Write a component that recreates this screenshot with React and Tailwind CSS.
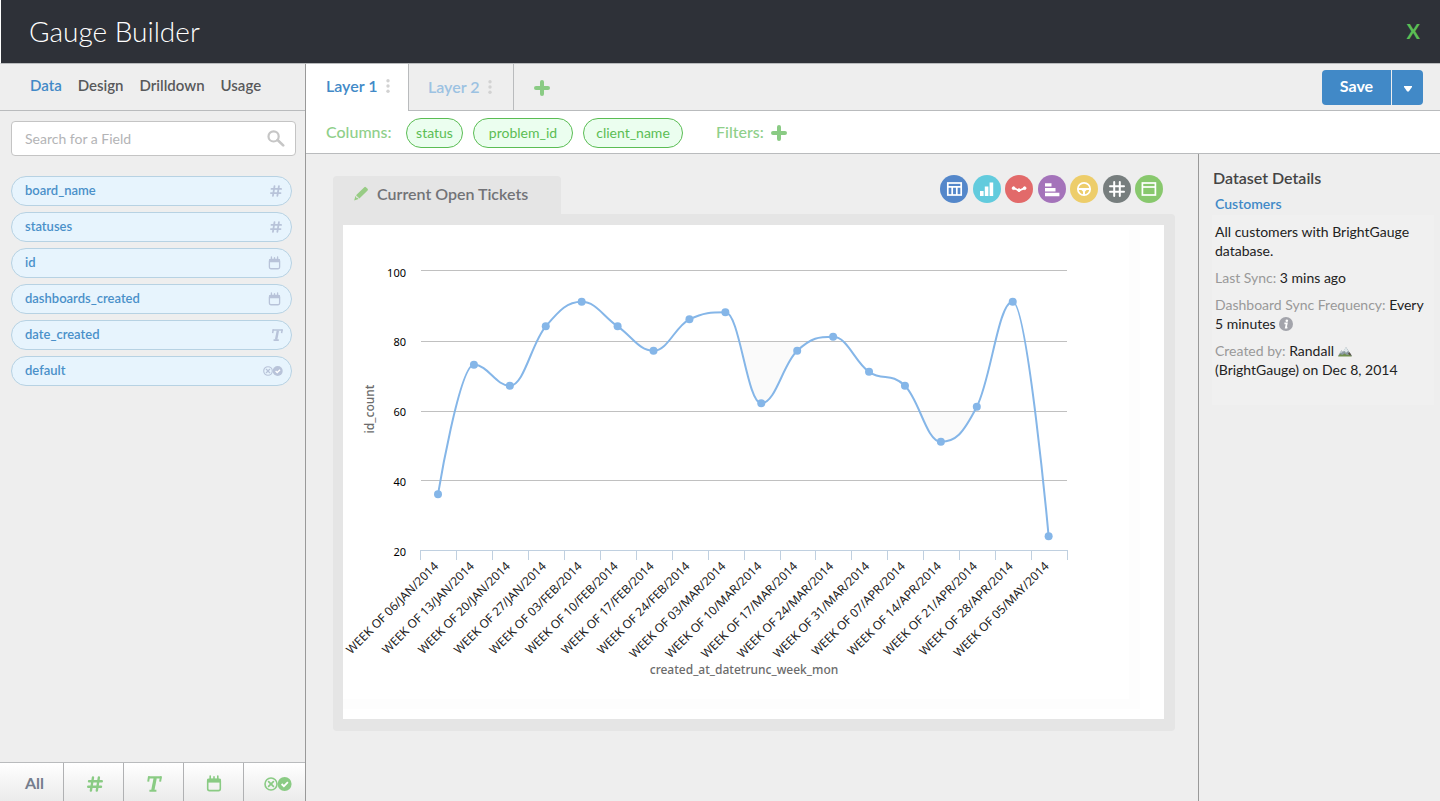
import React from "react";

function HashIcon({ className }) {
  return (
    <svg viewBox="0 0 16 16" className={className} fill="none" stroke="currentColor" strokeWidth="2.4" strokeLinecap="round" aria-hidden="true">
      <path d="M6 1.4 3.9 14.6M11.9 1.4 9.8 14.6M2 5.2h12.8M1.2 10.8H14" />
    </svg>
  );
}

function TextIcon({ className }) {
  return (
    <svg viewBox="0 0 16 16" className={className} fill="none" stroke="currentColor" aria-hidden="true">
      <path d="M2.2 1.4H15.4M3.4 14.8h7" strokeWidth="2.1" />
      <path d="M9.2 2 6.8 14.4" strokeWidth="3.2" />
      <path d="M3 .4 2.2 5.6M15 .4l-.9 5.2" strokeWidth="2" />
    </svg>
  );
}

function CalendarIcon({ className }) {
  return (
    <svg viewBox="0 0 16 17" className={className} aria-hidden="true">
      <rect x="1.7" y="4.2" width="12.6" height="11.4" rx="1.8" fill="none" stroke="currentColor" strokeWidth="1.6" />
      <path d="M1.2 3.8h13.6v3.8H1.2z" fill="currentColor" />
      <path d="M4.2 1v3M8 1.8v2M11.8 1v3" stroke="currentColor" strokeWidth="1.6" strokeLinecap="round" />
    </svg>
  );
}

function BooleanIcon({ className }) {
  return (
    <svg viewBox="0 0 28 14" className={className} aria-hidden="true">
      <circle cx="7" cy="7" r="6" fill="none" stroke="currentColor" strokeWidth="1.6" />
      <path d="m4.6 4.6 4.8 4.8M9.4 4.6 4.6 9.4" stroke="currentColor" strokeWidth="1.7" strokeLinecap="round" />
      <circle cx="20.6" cy="7" r="7" fill="currentColor" />
      <path d="m17.6 7 2.3 2.2 4-4" fill="none" stroke="#fff" strokeWidth="1.8" />
    </svg>
  );
}

function PlusIcon() {
  return (
    <svg viewBox="0 0 16 16" className="size-4" stroke="#8acb84" strokeWidth="4" strokeLinecap="round" aria-hidden="true">
      <path d="M8 2v12M2 8h12" />
    </svg>
  );
}

function Dots() {
  return (
    <svg viewBox="0 0 4 14" className="h-3.5 w-1" fill="#d2d2d2" aria-hidden="true">
      <circle cx="2" cy="1.8" r="1.7" />
      <circle cx="2" cy="7" r="1.7" />
      <circle cx="2" cy="12.2" r="1.7" />
    </svg>
  );
}

const fields = [
  { name: "board_name", icon: <HashIcon className="mr-px size-3" /> },
  { name: "statuses", icon: <HashIcon className="mr-px size-3" /> },
  { name: "id", icon: <CalendarIcon className="mr-0.5 h-[14px] w-[13px]" /> },
  { name: "dashboards_created", icon: <CalendarIcon className="mr-0.5 h-[14px] w-[13px]" /> },
  { name: "date_created", icon: <TextIcon className="size-3" /> },
  { name: "default", icon: <BooleanIcon className="h-2.5 w-5" /> },
];

function Sidebar() {
  return (
    <aside className="flex w-[306px] shrink-0 flex-col border-r border-[#999] bg-[#eee]">
      <nav className="flex h-[47px] items-center gap-4 border-b border-[#b9bbbd] pb-[3px] pl-[30px] text-[15px] font-semibold text-[#58595b]">
        <a href="#data" className="text-[#4189c7]">Data</a>
        <a href="#design">Design</a>
        <a href="#drilldown">Drilldown</a>
        <a href="#usage">Usage</a>
      </nav>
      <div className="flex-1 px-[11px] pt-2.5">
        <div className="mr-[-2px] flex h-[35px] items-center rounded-sm border border-[#c4c4c4] bg-white pr-2.5 pl-[13px]">
          <input type="text" aria-label="Search for a Field" placeholder="Search for a Field" className="min-w-0 flex-1 text-sm outline-none placeholder:text-[#b3b4b6]" />
          <svg viewBox="0 0 18 17" className="h-[17px] w-[18px]" fill="none" stroke="#c6c6c6" aria-hidden="true">
            <circle cx="6.6" cy="6.4" r="5.1" strokeWidth="2.2" />
            <path d="m10.6 10 5.6 5.4" strokeWidth="2.6" strokeLinecap="round" />
          </svg>
        </div>
        <ul className="mt-5 mr-0.5 flex flex-col gap-1.5">
          {fields.map((f) => (
            <li key={f.name}>
              <button type="button" className="flex h-[30px] w-full items-center justify-between rounded-full border border-[#b7d2e3] bg-[#e7f4fd] pr-2 pl-[13px] text-[13px] font-semibold text-[#4a90c9]">
                {f.name}
                <span className="text-[#b8c3d9]">{f.icon}</span>
              </button>
            </li>
          ))}
        </ul>
      </div>
      <div className="grid h-[39px] grid-cols-[64px_60px_60px_60px_1fr] divide-x divide-[#b0b1b3] border-t border-[#b9bbbd] bg-linear-to-b from-white to-[#ebebeb] text-[#8acb84]">
        <button type="button" className="pt-0.5 pl-1.5 text-base font-bold text-[#747d8d]">All</button>
        <button type="button" aria-label="Number fields" className="grid place-items-center pt-1 pl-0.5"><HashIcon className="size-4" /></button>
        <button type="button" aria-label="Text fields" className="grid place-items-center pt-1"><TextIcon className="size-4" /></button>
        <button type="button" aria-label="Date fields" className="grid place-items-center pt-0.5"><CalendarIcon className="h-[17px] w-4" /></button>
        <button type="button" aria-label="Boolean fields" className="grid place-items-center pt-1 pl-1.5"><BooleanIcon className="h-3.5 w-7" /></button>
      </div>
    </aside>
  );
}

const chartTypes = [
  {
    name: "Table", bg: "bg-[#5487ca]",
    art: (
      <g fill="none" stroke="#fff">
        <rect x="7.8" y="8" width="13.4" height="12" strokeWidth="1.7" />
        <path d="M7.5 11.8h14M12.2 12v8M16.8 12v8" strokeWidth="1.7" />
      </g>
    ),
  },
  { name: "Column chart", bg: "bg-[#62cbdd]", art: <path d="M7 16h3.6v5H7zM11.8 11.5h3.6V21h-3.6zM16.6 7.5h3.6V21h-3.6z" fill="#fff" /> },
  {
    name: "Line chart", bg: "bg-[#e26a6a]",
    art: (
      <g fill="#fff" stroke="#fff">
        <path d="m9 13.3 5 2.2 5.2-2.2" fill="none" strokeWidth="1.8" />
        <circle cx="8.6" cy="13.2" r="1.4" />
        <circle cx="14" cy="15.2" r="1.4" />
        <circle cx="19.6" cy="13.2" r="1.4" />
      </g>
    ),
  },
  { name: "Bar chart", bg: "bg-[#a473ba]", art: <path d="M7 8.2h6.5v3.4H7zM7 13h10.5v3.4H7zM7 17.8h14.4v3.4H7z" fill="#fff" /> },
  {
    name: "Gauge", bg: "bg-[#edcd6a]",
    art: (
      <g fill="none" stroke="#fff">
        <circle cx="14" cy="14" r="6.2" strokeWidth="1.7" />
        <path d="M8 14h12M14 15v5" strokeWidth="2" />
        <path d="M11 14.5h6l-1.8 2h-2.4z" fill="#fff" stroke="none" />
      </g>
    ),
  },
  { name: "Number", bg: "bg-[#777e7e]", art: <path d="M11.2 7v14M16.8 7v14M7 11.2h14M7 16.8h14" stroke="#fff" strokeWidth="2" strokeLinecap="round" /> },
  {
    name: "List", bg: "bg-[#88c86d]",
    art: (
      <g fill="none" stroke="#fff" strokeWidth="1.7">
        <rect x="7.4" y="8" width="13" height="12" />
        <path d="M7 12h14" />
      </g>
    ),
  },
];

const series = [
  ["06/JAN", 36], ["13/JAN", 73], ["20/JAN", 67], ["27/JAN", 84], ["03/FEB", 91], ["10/FEB", 84],
  ["17/FEB", 77], ["24/FEB", 86], ["03/MAR", 88], ["10/MAR", 62], ["17/MAR", 77], ["24/MAR", 81],
  ["31/MAR", 71], ["07/APR", 67], ["14/APR", 51], ["21/APR", 61], ["28/APR", 91], ["05/MAY", 24],
];

const STEP = 35.92;
const points = series.map(([, v], i) => [95 + i * STEP, 45.3 + (100 - v) * 3.5]);

// Smooth curve whose control points never overshoot the neighbouring values.
function spline(pts) {
  const ctrl = pts.map(([x, y], i) => {
    if (i === 0 || i === pts.length - 1) return { lx: x, ly: y, rx: x, ry: y };
    const [px, py] = pts[i - 1];
    const [nx, ny] = pts[i + 1];
    const lx = (1.5 * x + px) / 2.5;
    let ly = (1.5 * y + py) / 2.5;
    const rx = (1.5 * x + nx) / 2.5;
    let ry = (1.5 * y + ny) / 2.5;
    const fix = ((ry - ly) * (rx - x)) / (rx - lx) + y - ry;
    ly += fix;
    ry += fix;
    if (ly > py && ly > y) { ly = Math.max(py, y); ry = 2 * y - ly; }
    else if (ly < py && ly < y) { ly = Math.min(py, y); ry = 2 * y - ly; }
    if (ry > ny && ry > y) { ry = Math.max(ny, y); ly = 2 * y - ry; }
    else if (ry < ny && ry < y) { ry = Math.min(ny, y); ly = 2 * y - ry; }
    return { lx, ly, rx, ry };
  });
  return pts.reduce(
    (d, [x, y], i) =>
      i === 0 ? `M${x} ${y}` : `${d}C${ctrl[i - 1].rx} ${ctrl[i - 1].ry} ${ctrl[i].lx} ${ctrl[i].ly} ${x} ${y}`,
    ""
  );
}

const curve = spline(points);

function Chart() {
  return (
    <svg viewBox="0 0 821 494" className="block h-auto w-full bg-white font-['Noto_Sans',sans-serif]" role="img" aria-label="id_count by week">
      <defs>
        <clipPath id="dips">
          <path d="M285 116h50v70h-50zM395 116h80v70h-80zM570 186h70v70h-70z" />
        </clipPath>
      </defs>
      <path d="M0 474h786V5h11v479H0z" fill="#fdfdfd" />
      <path d={`${curve}V0H95z`} fill="#fafafa" clipPath="url(#dips)" />
      <path d="M78 45.5h646M78 116.5h646M78 186.5h646M78 255.5h646" stroke="#c0c0c0" />
      <path d="M77 325.5h648" stroke="#c0d0e0" />
      {Array.from({ length: 19 }, (_, i) => (
        <path key={i} d={`M${Math.round(77 + i * 35.95) + 0.5} 325v10`} stroke="#c0d0e0" />
      ))}
      <path d={curve} fill="none" stroke="#85b6e8" strokeWidth="2" strokeLinejoin="round" />
      {points.map(([x, y]) => (
        <circle key={x} cx={x} cy={y} r="4" fill="#85b6e8" />
      ))}
      <g fontSize="11" textAnchor="end" fill="#000">
        <text x="63" y="52">100</text>
        <text x="63" y="121">80</text>
        <text x="63" y="191">60</text>
        <text x="63" y="261">40</text>
        <text x="63" y="331">20</text>
      </g>
      <g fontSize="12" textAnchor="end" fill="#222">
        {series.map(([week], i) => (
          <text key={week} transform={`translate(${96 + i * STEP} 342) rotate(-45)`}>{`WEEK OF ${week}/2014`}</text>
        ))}
      </g>
      <g fontSize="12" textAnchor="middle" fill="#6b6b6b" fontWeight="500">
        <text x="401" y="449">created_at_datetrunc_week_mon</text>
        <text transform="translate(31 184) rotate(-90)">id_count</text>
      </g>
    </svg>
  );
}

function GaugeCard() {
  return (
    <section className="min-w-0 flex-1 pt-[22px] pr-[23px] pb-8 pl-[27px]">
      <div className="flex items-start justify-between">
        <h2 className="flex h-[38px] w-[228px] items-center gap-2 rounded-t bg-[#e5e5e5] pb-0.5 pl-5 text-base font-semibold text-[#727377]">
          <svg viewBox="0 0 16 16" className="size-4" fill="#98cc85" aria-hidden="true">
            <path d="M11.3 1.2q.8-.7 1.6 0l1.7 1.6q.7.8 0 1.6L6.4 12.4 3 9.2zM2.4 9.9l1 1-.2 1 1.2-.1 1.2 1.2-4.4 1.4z" />
          </svg>
          Current Open Tickets
        </h2>
        <div className="mr-3 flex w-[223px] justify-between">
          {chartTypes.map((t) => (
            <button key={t.name} type="button" aria-label={t.name} className={`mt-[-1px] size-7 rounded-full ${t.bg}`}>
              <svg viewBox="0 0 28 28" className="size-7" aria-hidden="true">{t.art}</svg>
            </button>
          ))}
        </div>
      </div>
      <div className="rounded rounded-tl-none bg-[#e5e5e5] pt-[11px] pr-[11px] pb-3 pl-2.5">
        <Chart />
      </div>
    </section>
  );
}

function Details() {
  return (
    <aside className="w-[242px] shrink-0 border-l border-[#999] pt-3 pr-1.5 pl-[13px] text-sm leading-[19px] text-[#222]">
      <h2 className="pl-px text-base leading-6 font-semibold text-[#444]">Dataset Details</h2>
      <a href="#customers" className="mt-1 block pl-[3px] font-semibold text-[#4189c7]">Customers</a>
      <div className="mt-0.5 flex h-[190px] flex-col gap-2 bg-[#f0f0f0] pt-[7px] pl-[3px]">
        <p>All customers with BrightGauge database.</p>
        <p><span className="text-[#999]">Last Sync:</span> 3 mins ago</p>
        <p>
          <span className="text-[#999]">Dashboard Sync Frequency:</span> Every 5 minutes{" "}
          <svg viewBox="0 0 14 14" className="inline size-3.5 align-[-2px]" aria-hidden="true">
            <circle cx="7" cy="7" r="7" fill="#a3a4ab" />
            <circle cx="7.8" cy="3.7" r="1.3" fill="#fff" />
            <path d="M5.4 6.3h2.4l-1 4.4h1.6" fill="none" stroke="#fff" strokeWidth="1.7" />
          </svg>
        </p>
        <p>
          <span className="text-[#999]">Created by:</span> Randall{" "}
          <svg viewBox="0 0 14 11" className="inline h-[11px] w-3.5 align-[-1px]" aria-hidden="true">
            <path d="M0 10 3.4 4.2 5 6 8 1l6 9z" fill="#8b9aa1" />
            <path d="m8 1-2.4 3.8 1.6.6.8 1.6 1.2-1.6 1.3.2z" fill="#dfe7ea" />
            <path d="M3.4 4.2 1.8 7l1.6-.6 1 .8z" fill="#cbd5d9" />
            <path d="M0 10.6 2 8l2.4 1 2-1.6L9 9l2.4-.6L14 10.6z" fill="#6f8f4d" />
            <path d="m10 7.6 1.6-1.4 2.2 3.6-2.4-.8z" fill="#5b5348" />
          </svg>{" "}
          <span className="whitespace-nowrap">(BrightGauge) on Dec 8, 2014</span>
        </p>
      </div>
    </aside>
  );
}

function LayerBar() {
  return (
    <div className="flex h-[47px] bg-[#eee]">
      <button type="button" className="flex w-[103px] items-center gap-2 border-r border-[#b9bbbd] bg-white pb-[3px] pl-5 text-base font-semibold text-[#4189c7]">
        Layer 1 <Dots />
      </button>
      <button type="button" className="flex w-[105px] items-center gap-2 border-r border-b border-[#b9bbbd] pb-px pl-[19px] text-base font-semibold text-[#9cc2e2]">
        Layer 2 <Dots />
      </button>
      <div className="flex flex-1 items-center justify-between border-b border-[#b9bbbd] pr-[17px] pl-5">
        <button type="button" aria-label="Add layer" className="mt-0.5"><PlusIcon /></button>
        <div className="flex h-[35px] gap-px text-white">
          <button type="button" className="w-[69px] rounded-l bg-[#4189c7] pb-0.5 text-base font-bold">Save</button>
          <button type="button" aria-label="More save options" className="grid w-[31px] place-items-center rounded-r bg-[#4189c7] pt-[3px]">
            <svg viewBox="0 0 8 6" className="h-1.5 w-2" fill="#fff" aria-hidden="true"><path d="M0 0h8v1L4.8 5.6H3.2L0 1z" /></svg>
          </button>
        </div>
      </div>
    </div>
  );
}

const pill = "h-[30px] rounded-full border border-[#5bbd54] bg-[#ebfeef] pb-px text-sm text-[#5bbd54]";

function ColumnsBar() {
  return (
    <div className="flex h-[43px] items-center border-b border-[#b9bbbd] bg-white pt-0.5 pl-5 text-base font-medium text-[#8fcf8a]">
      <span className="w-20 pb-0.5">Columns:</span>
      <div className="flex gap-2.5 font-normal">
        <button type="button" className={`${pill} w-[57px]`}>status</button>
        <button type="button" className={`${pill} w-[100px]`}>problem_id</button>
        <button type="button" className={`${pill} w-[100px]`}>client_name</button>
      </div>
      <span className="ml-[33px] pb-0.5">Filters:</span>
      <button type="button" aria-label="Add filter" className="ml-[7px]"><PlusIcon /></button>
    </div>
  );
}

export default function App() {
  return (
    <div className="flex min-h-screen flex-col bg-[#eee] font-[Lato,sans-serif]">
      <header className="flex h-16 items-center justify-between border-b border-l border-b-[#b9bbbd] border-l-white bg-[#2e3138] pr-5 pb-0.5 pl-7 text-white">
        <h1 className="text-[28px] font-light">Gauge Builder</h1>
        <button type="button" aria-label="Close" className="text-xl font-bold text-[#5bbd54]">X</button>
      </header>
      <div className="flex flex-1">
        <Sidebar />
        <main className="flex min-w-0 flex-1 flex-col">
          <LayerBar />
          <ColumnsBar />
          <div className="flex flex-1">
            <GaugeCard />
            <Details />
          </div>
        </main>
      </div>
    </div>
  );
}
